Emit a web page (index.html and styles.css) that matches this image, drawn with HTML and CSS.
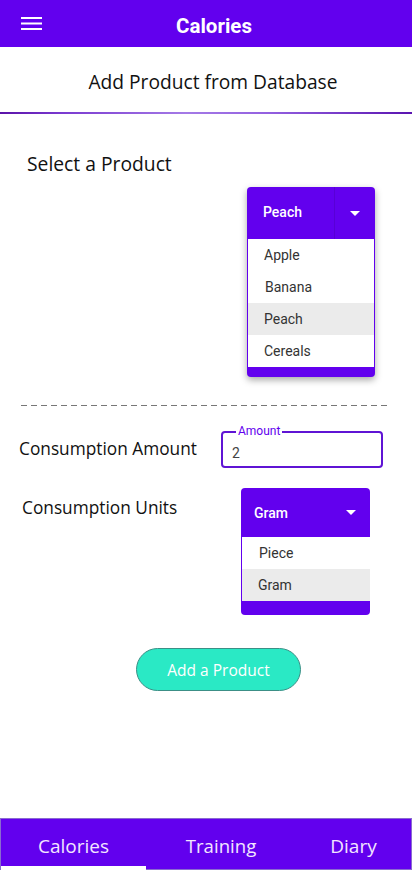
FILE: index.html
```html
<!DOCTYPE html>
<html>
<head>
<meta charset="utf-8">
<link rel="stylesheet" href="styles.css">
</head>
<body>
<div class="app">
  <header class="topbar">
    <svg class="menu" width="22" height="14" viewBox="0 0 22 14"><rect x="0" y="0" width="21" height="2" fill="#fff"/><rect x="0" y="5.5" width="21" height="2" fill="#fff"/><rect x="0" y="11" width="21" height="2" fill="#fff"/></svg>
    <div class="title">Calories</div>
  </header>
  <div class="subheader">Add Product from Database</div>
  <div class="rule"></div>
  <main class="main">
    <div class="label select-label">Select a Product</div>
    <div class="dd product-dd">
      <div class="dd-head">
        <span class="dd-value">Peach</span>
        <span class="dd-caret split"><svg width="10" height="5" viewBox="0 0 10 5"><path d="M0 0h10L5 5z" fill="#fff"/></svg></span>
      </div>
      <ul class="dd-list">
        <li>Apple</li>
        <li class="b">Banana</li>
        <li class="on">Peach</li>
        <li>Cereals</li>
      </ul>
      <div class="dd-foot"></div>
    </div>
    <div class="dash"></div>
    <div class="row amount-row">
      <div class="label">Consumption Amount</div>
      <div class="field">
        <span class="field-label">Amount</span>
        <span class="field-value">2</span>
      </div>
    </div>
    <div class="row units-row">
      <div class="label units-label">Consumption Units</div>
      <div class="dd units-dd">
        <div class="dd-head">
          <span class="dd-value">Gram</span>
          <span class="dd-caret"><svg width="10" height="5" viewBox="0 0 10 5"><path d="M0 0h10L5 5z" fill="#fff"/></svg></span>
        </div>
        <ul class="dd-list">
          <li>Piece</li>
          <li class="on">Gram</li>
        </ul>
        <div class="dd-foot"></div>
      </div>
    </div>
    <div class="btn-wrap"><button class="add-btn">Add a Product</button></div>
  </main>
  <nav class="tabs">
    <div class="tab active">Calories</div>
    <div class="tab">Training</div>
    <div class="tab">Diary</div>
  </nav>
</div>
</body>
</html>
```
FILE: styles.css
```css
* { box-sizing: border-box; }
html, body { margin: 0; padding: 0; }
body { width: 412px; height: 870px; background: #fff; font-family: "Open Sans", "Noto Sans", sans-serif; color: #111; }
.app { height: 870px; display: flex; flex-direction: column; }
.topbar { height: 47px; background: #6200ee; display: flex; align-items: center; position: relative; flex: none; }
.menu { margin-left: 21px; display: block; }
.title { position: absolute; left: 16px; right: 0; text-align: center; color: #fff; font-family: Roboto, sans-serif; font-weight: 700; font-size: 20.5px; top: 14px; line-height: 24px; pointer-events: none; }
.subheader { height: 65px; display: flex; align-items: center; justify-content: center; font-size: 19.2px; color: #111; padding-top: 4px; padding-left: 14px; flex: none; }
.rule { height: 2px; flex: none; background: linear-gradient(to right, #5a12a8 0%, #7a3ad0 15%, #a47ae6 45%, #9360e0 65%, #5a14b0 100%); }
.main { flex: 1; display: flex; flex-direction: column; }
.label { font-size: 17.3px; color: #111; }
.select-label { margin: 37px 0 0 27px; line-height: 26px; font-size: 19.3px; }
.dd { background: #6200ee; border-radius: 4px; display: flex; flex-direction: column; }
.product-dd { margin: 10px 0 0 247px; width: 128px; box-shadow: 0 3px 7px rgba(0,0,0,0.35); }
.dd-head { height: 52px; display: flex; align-items: center; color: #fff; font-family: Roboto, sans-serif; font-weight: 500; font-size: 14px; }
.dd-value { flex: 1; padding-left: 16px; padding-bottom: 3px; }
.dd-caret { width: 41px; height: 52px; display: flex; align-items: center; justify-content: center; }
.dd-caret svg { display: block; }
.dd-caret.split { border-left: 1px solid #5800d6; }
.dd-list { list-style: none; margin: 0 1px; padding: 0; background: #fff; font-family: Roboto, sans-serif; font-size: 14px; color: #333; }
.dd-list li { height: 32px; line-height: 32px; padding-left: 16px; }
.dd-list li.b { padding-left: 17px; }
.dd-list li.on { background: #ebebeb; }
.product-dd .dd-foot { height: 10px; }
.dash { margin: 28px 25px 0 21px; height: 1px; background: repeating-linear-gradient(to right, #777 0 6px, transparent 6px 10px); }
.row { display: flex; }
.amount-row { margin-top: 25px; align-items: center; }
.amount-row .label { margin-left: 19px; width: 202px; padding-bottom: 2px; }
.field { position: relative; width: 162px; height: 37px; border: 2px solid #5f14d4; border-radius: 4px; }
.field-label { position: absolute; top: -9px; left: 13px; padding: 0 2px; background: #fff; color: #6200ee; font-family: Roboto, sans-serif; font-size: 12px; line-height: 14px; }
.field-value { position: absolute; left: 9px; top: 12px; font-family: Roboto, sans-serif; font-size: 14px; color: #444; line-height: 16px; }
.units-row { margin-top: 20px; align-items: flex-start; }
.units-label { margin: 8px 0 0 22px; width: 219px; }
.units-dd { width: 129px; }
.units-dd .dd-head { height: 49px; }
.units-dd .dd-value { padding-left: 13px; padding-bottom: 0; }
.units-dd .dd-caret { width: 38px; height: 49px; }
.units-dd .dd-list { margin: 0 0 0 1px; }
.units-dd .dd-list li { padding-left: 17px; }
.units-dd .dd-list li.on { padding-left: 16px; }
.units-dd .dd-foot { height: 14px; }
.btn-wrap { margin-top: 33px; padding-left: 136px; }
.add-btn { width: 165px; height: 43px; border-radius: 22px; background: #2ae9c5; border: 1px solid #3c8f86; color: #fff; font-family: "Open Sans", "Noto Sans", sans-serif; font-size: 15.5px; padding: 0; }
.tabs { flex: none; height: 52px; background: #6200ee; border: 1px solid #8a6ad0; display: grid; grid-template-columns: 145px 150px 1fr; }
.tab { color: #f3e6ff; font-size: 19px; text-align: center; line-height: 50px; padding-top: 2px; position: relative; white-space: nowrap; }
.tab:nth-child(2) { font-size: 18.6px; }
.tab.active::after { content: ""; position: absolute; left: 0; right: 0; bottom: -1px; height: 6px; background: #fff; }
```
